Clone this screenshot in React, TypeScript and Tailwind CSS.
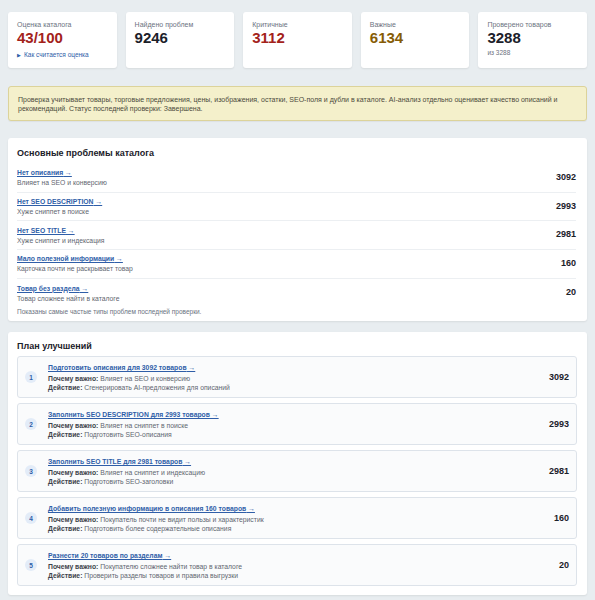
const stats = [
  { label: 'Оценка каталога', value: '43/100', color: 'text-[#a3221b]', extra: 'link' },
  { label: 'Найдено проблем', value: '9246', color: 'text-[#1b2029]' },
  { label: 'Критичные', value: '3112', color: 'text-[#a3221b]' },
  { label: 'Важные', value: '6134', color: 'text-[#865c05]' },
  { label: 'Проверено товаров', value: '3288', color: 'text-[#1b2029]', extra: 'из 3288' },
];

const problems = [
  { title: 'Нет описания', sub: 'Влияет на SEO и конверсию', count: 3092 },
  { title: 'Нет SEO DESCRIPTION', sub: 'Хуже сниппет в поиске', count: 2993 },
  { title: 'Нет SEO TITLE', sub: 'Хуже сниппет и индексация', count: 2981 },
  { title: 'Мало полезной информации', sub: 'Карточка почти не раскрывает товар', count: 160 },
  { title: 'Товар без раздела', sub: 'Товар сложнее найти в каталоге', count: 20 },
];

const plan = [
  {
    title: 'Подготовить описания для 3092 товаров',
    why: 'Влияет на SEO и конверсию',
    action: 'Сгенерировать AI-предложения для описаний',
    count: 3092,
  },
  {
    title: 'Заполнить SEO DESCRIPTION для 2993 товаров',
    why: 'Влияет на сниппет в поиске',
    action: 'Подготовить SEO-описания',
    count: 2993,
  },
  {
    title: 'Заполнить SEO TITLE для 2981 товаров',
    why: 'Влияет на сниппет и индексацию',
    action: 'Подготовить SEO-заголовки',
    count: 2981,
  },
  {
    title: 'Добавить полезную информацию в описания 160 товаров',
    why: 'Покупатель почти не видит пользы и характеристик',
    action: 'Подготовить более содержательные описания',
    count: 160,
  },
  {
    title: 'Разнести 20 товаров по разделам',
    why: 'Покупателю сложнее найти товар в каталоге',
    action: 'Проверить разделы товаров и правила выгрузки',
    count: 20,
  },
];

export default function App() {
  return (
    <div className="min-h-[600px] bg-[#e8edf0] px-2 pt-3 pb-2 font-['Liberation_Sans',Arial,sans-serif] text-[#1b2029]">
      <div className="grid grid-cols-5 gap-[9px]">
        {stats.map((s) => (
          <div
            key={s.label}
            className="h-[56px] rounded-[3px] bg-white px-[9px] pt-[8px] shadow-[0_1px_2px_rgba(0,0,0,0.08)]"
          >
            <div className="text-[7px] leading-[9px] text-[#6b7280]">{s.label}</div>
            <div className={`text-[15px] leading-[18px] font-bold ${s.color}`}>{s.value}</div>
            {s.extra === 'link' && (
              <div className="mt-[4px] flex items-center gap-[3px] text-[6.5px] leading-[8px] text-[#2f5ea8]">
                <span className="text-[5px]">▶</span>
                <span>Как считается оценка</span>
              </div>
            )}
            {s.extra && s.extra !== 'link' && (
              <div className="mt-[2px] text-[6.5px] leading-[8px] text-[#6b7280]">{s.extra}</div>
            )}
          </div>
        ))}
      </div>

      <div className="mt-[18px] rounded-[3px] border border-[#dcd39a] bg-[#f4f0cb] px-[9px] py-[7.5px] text-[7px] leading-[9px] text-[#4b4a3c] shadow-[0_1px_1px_rgba(0,0,0,0.05)]">
        Проверка учитывает товары, торговые предложения, цены, изображения, остатки, SEO-поля и дубли в каталоге. AI-анализ отдельно оценивает качество описаний и рекомендаций. Статус последней проверки: Завершена.
      </div>

      <div className="mt-[17px] rounded-[3px] bg-white px-[9px] pt-[9px] pb-[5px] pr-[11px] shadow-[0_1px_2px_rgba(0,0,0,0.08)]">
        <div className="text-[9px] leading-[12px] font-bold text-[#1b2029]">Основные проблемы каталога</div>
        <div className="mt-[5px]">
          {problems.map((p, i) => (
            <div
              key={p.title}
              className={`flex h-[28.7px] items-center justify-between ${
                i < problems.length - 1 ? 'border-b border-[#eceff2]' : ''
              }`}
            >
              <div>
                <div className="text-[6.8px] leading-[9px] font-bold text-[#2f5ea8] underline underline-offset-1">
                  {p.title} →
                </div>
                <div className="mt-[1px] text-[6.8px] leading-[9px] text-[#5f6670]">{p.sub}</div>
              </div>
              <div className="text-[9px] font-bold text-[#1b2029]">{p.count}</div>
            </div>
          ))}
        </div>
        <div className="text-[6.5px] leading-[9px] text-[#6b7280]">
          Показаны самые частые типы проблем последней проверки.
        </div>
      </div>

      <div className="mt-[11px] rounded-[3px] bg-white px-[9px] pt-[8px] pb-[9px] pr-[10px] shadow-[0_1px_2px_rgba(0,0,0,0.08)]">
        <div className="text-[9px] leading-[12px] font-bold text-[#1b2029]">План улучшений</div>
        <div className="mt-[4px] flex flex-col gap-[5px]">
          {plan.map((p, i) => (
            <div
              key={p.title}
              className="flex h-[42px] items-center rounded-[3px] border border-[#dde3ea] bg-[#fafbfc] pl-[7px] pr-[7px]"
            >
              <div className="flex h-[12px] w-[12px] shrink-0 items-center justify-center rounded-full bg-[#e3ecf8] text-[6.5px] font-bold text-[#2f5ea8]">
                {i + 1}
              </div>
              <div className="ml-[11px] flex-1">
                <div className="text-[6.8px] leading-[9px] font-bold text-[#2f5ea8] underline underline-offset-1">
                  {p.title} →
                </div>
                <div className="mt-[2px] text-[6.8px] leading-[9px] text-[#5f6670]">
                  <span className="font-bold text-[#3d434b]">Почему важно:</span> {p.why}
                </div>
                <div className="text-[6.8px] leading-[9px] text-[#5f6670]">
                  <span className="font-bold text-[#3d434b]">Действие:</span> {p.action}
                </div>
              </div>
              <div className="text-[9px] font-bold text-[#1b2029]">{p.count}</div>
            </div>
          ))}
        </div>
      </div>
    </div>
  );
}
